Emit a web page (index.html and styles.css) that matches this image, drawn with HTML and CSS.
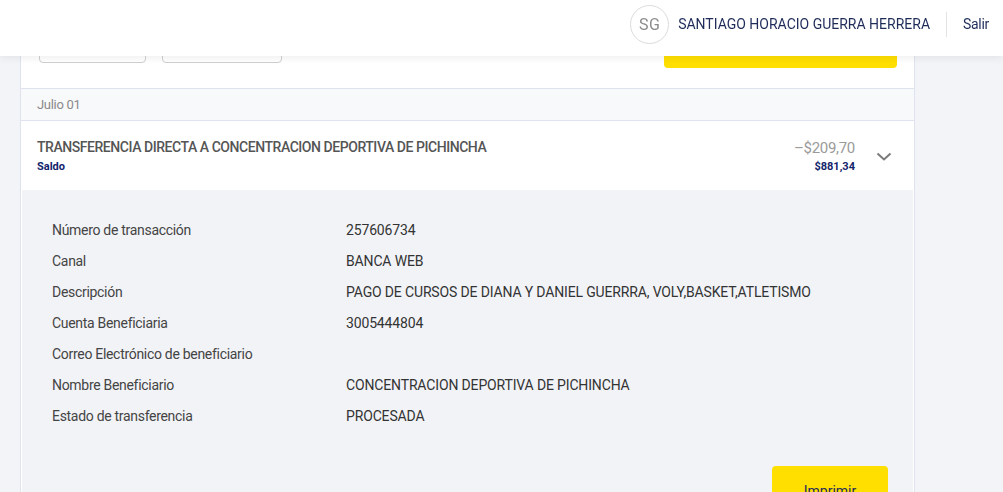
FILE: index.html
```html
<!DOCTYPE html>
<html lang="es">
<head>
<meta charset="utf-8">
<title>Movimientos</title>
<link rel="stylesheet" href="styles.css">
</head>
<body>
<header class="topbar">
  <div class="avatar">SG</div>
  <div class="user-name">SANTIAGO HORACIO GUERRA HERRERA</div>
  <div class="divider"></div>
  <a class="logout">Salir</a>
</header>
<main class="page">
  <section class="card">
    <div class="toolbar">
      <button class="btn-outline btn-a"></button>
      <button class="btn-outline btn-b"></button>
      <div class="spacer"></div>
      <button class="btn-yellow-top"></button>
    </div>
    <div class="date-row">Julio 01</div>
    <div class="tx-row">
      <div class="tx-left">
        <div class="tx-title">TRANSFERENCIA DIRECTA A CONCENTRACION DEPORTIVA DE PICHINCHA</div>
        <div class="tx-sub">Saldo</div>
      </div>
      <div class="tx-right">
        <div class="tx-amount">–$209,70</div>
        <div class="tx-balance">$881,34</div>
      </div>
      <svg class="chevron" width="16" height="10" viewBox="0 0 16 10"><path d="M1.5 1.5 L8 7.5 L14.5 1.5" fill="none" stroke="#7a7a7a" stroke-width="2"/></svg>
    </div>
    <div class="details">
      <dl class="detail-list">
        <dt>Número de transacción</dt><dd>257606734</dd>
        <dt>Canal</dt><dd>BANCA WEB</dd>
        <dt>Descripción</dt><dd>PAGO DE CURSOS DE DIANA Y DANIEL GUERRRA, VOLY,BASKET,ATLETISMO</dd>
        <dt>Cuenta Beneficiaria</dt><dd>3005444804</dd>
        <dt>Correo Electrónico de beneficiario</dt><dd></dd>
        <dt>Nombre Beneficiario</dt><dd>CONCENTRACION DEPORTIVA DE PICHINCHA</dd>
        <dt>Estado de transferencia</dt><dd>PROCESADA</dd>
      </dl>
      <div class="actions">
        <button class="btn-print">Imprimir</button>
      </div>
    </div>
  </section>
</main>
</body>
</html>
```
FILE: styles.css
```css
* { box-sizing: border-box; }
html, body { margin: 0; padding: 0; }
body {
  background: #f3f4f7;
  font-family: Roboto, "Liberation Sans", sans-serif;
  color: #333;
  overflow: hidden;
}
.topbar {
  position: fixed;
  top: 0; left: 0; right: 0;
  height: 56px;
  background: #fff;
  box-shadow: 0 2px 8px rgba(0,0,0,0.07);
  display: flex;
  align-items: center;
  justify-content: flex-end;
  padding: 0 14px 8px 0;
  z-index: 10;
}
.avatar {
  width: 39px; height: 39px;
  border: 1px solid #dcdcdc;
  border-radius: 50%;
  display: flex; align-items: center; justify-content: center;
  color: #8c8c8c;
  font-size: 16px;
  letter-spacing: 0.5px;
}
.user-name {
  margin-left: 9px;
  color: #1f2c5a;
  font-size: 14px;
  letter-spacing: 0;
}
.divider {
  width: 1px; height: 25px;
  background: #e3e3e3;
  margin: 0 16px;
}
.logout {
  color: #1f2c5a;
  font-size: 14px;
  letter-spacing: -0.3px;
}
.page {
  padding-left: 20px;
}
.card {
  width: 895px;
  background: #fff;
  border-left: 1px solid #dfe3ee;
  border-right: 1px solid #dfe3ee;
}
.toolbar {
  height: 88px;
  display: flex;
  align-items: flex-start;
  padding: 27px 17px 0 18px;
}
.btn-outline {
  height: 36px;
  background: #fff;
  border: 1px solid #cfcfcf;
  border-radius: 4px;
}
.btn-a { width: 107px; }
.btn-b { width: 120px; margin-left: 16px; }
.spacer { flex: 1; }
.btn-yellow-top {
  width: 233px; height: 41px;
  background: #ffdf00;
  border: none;
  border-radius: 4px;
}
.date-row {
  height: 33px;
  background: #f8f9fb;
  border-top: 1px solid #dfe3ee;
  border-bottom: 1px solid #dfe3ee;
  padding-left: 16px;
  display: flex; align-items: center;
  font-size: 13px;
  color: #8a8a8a;
  letter-spacing: -0.3px;
}
.tx-row {
  height: 69px;
  display: flex;
  align-items: center;
  padding: 0 22px 0 16px;
}
.tx-left { flex: 1; }
.tx-title {
  font-size: 14px;
  font-weight: 500;
  color: #555;
  letter-spacing: -0.45px;
  line-height: 18px;
  margin-top: 1px;
}
.tx-sub {
  font-size: 11px;
  font-weight: 700;
  color: #13246b;
  line-height: 14px;
  margin-top: 4px;
}
.tx-right { text-align: right; margin-right: 1px; }
.tx-amount {
  font-size: 15px;
  color: #9a9a9a;
  line-height: 18px;
  letter-spacing: -0.3px;
  margin-top: 2px;
}
.tx-balance {
  font-size: 11px;
  font-weight: 700;
  color: #13246b;
  line-height: 14px;
  margin-top: 3px;
}
.chevron { margin-left: 20px; margin-top: 2px; }
.details {
  background: #f2f3f7;
  margin: 0 1px;
  padding: 31px 25px 30px 30px;
}
.detail-list {
  display: grid;
  grid-template-columns: 294px 1fr;
  grid-auto-rows: 31px;
  margin: 0;
  font-size: 14px;
  line-height: 18px;
}
.detail-list dt { color: #444; letter-spacing: -0.3px; }
.detail-list dd { margin: 0; color: #333; letter-spacing: -0.15px; }
.actions {
  display: flex;
  justify-content: flex-end;
  margin-top: 28px;
}
.btn-print {
  width: 116px; height: 44px;
  background: #ffdf00;
  border: none;
  border-radius: 4px;
  font-family: Roboto, "Liberation Sans", sans-serif;
  font-size: 14px;
  color: #1f2c5a;
  padding-top: 6px;
}
```
